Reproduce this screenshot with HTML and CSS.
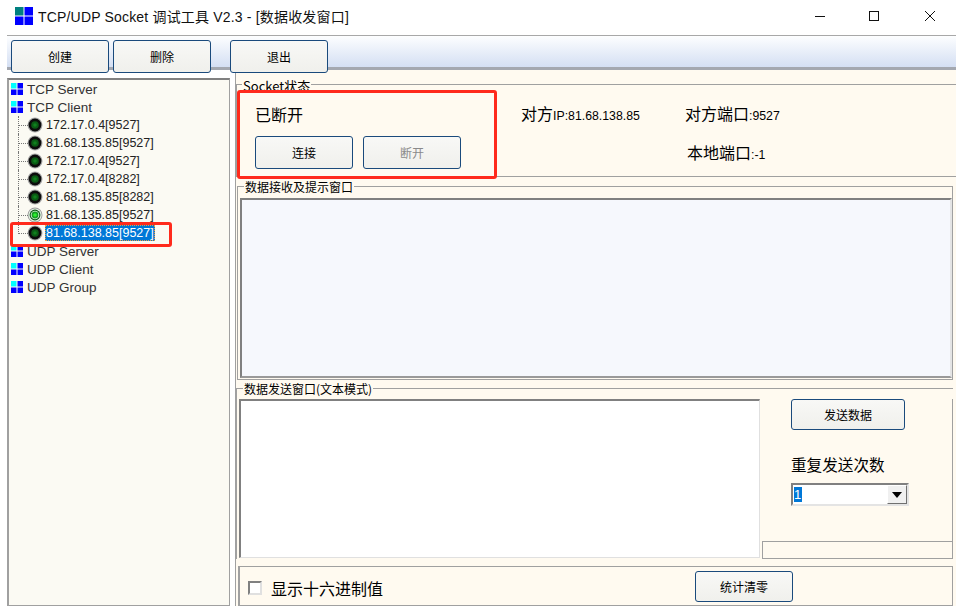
FILE: index.html
```html
<!DOCTYPE html>
<html lang="zh">
<head>
<meta charset="utf-8">
<title>TCP/UDP Socket 调试工具</title>
<link rel="stylesheet" href="styles.css">
</head>
<body>
<div class="window">
  <header class="titlebar">
    <svg class="app-icon" width="18" height="18" viewBox="0 0 18 18"><rect width="8.5" height="8.5" fill="#008080"/><rect x="9.5" width="8.5" height="8.5" fill="#0000ff"/><rect y="9.5" width="8.5" height="8.5" fill="#0000ff"/><rect x="9.5" y="9.5" width="8.5" height="8.5" fill="#0000ff"/></svg>
    <span class="title">TCP/UDP Socket 调试工具 V2.3 - [数据收发窗口]</span>
    <div class="win-controls">
      <svg width="12" height="12" viewBox="0 0 12 12"><path d="M1 6.5h10" stroke="#111" fill="none"/></svg>
      <svg width="12" height="12" viewBox="0 0 12 12"><rect x=".5" y="1.5" width="9" height="9" stroke="#111" fill="none"/></svg>
      <svg width="12" height="12" viewBox="0 0 12 12"><path d="M1 1l10 10M11 1L1 11" stroke="#111" fill="none"/></svg>
    </div>
  </header>
  <nav class="toolbar">
    <button class="btn tb-btn">创建</button>
    <button class="btn tb-btn">删除</button>
    <button class="btn tb-btn tb-gap">退出</button>
  </nav>
  <main class="main">
    <aside class="tree">
      <div class="node"><svg class="sq"><use href="#sq"/></svg>TCP Server</div>
      <div class="node"><svg class="sq"><use href="#sq"/></svg>TCP Client</div>
      <div class="child"><i class="branch"></i><svg class="led"><use href="#led"/></svg><span class="lbl">172.17.0.4[9527]</span></div>
      <div class="child"><i class="branch"></i><svg class="led"><use href="#led"/></svg><span class="lbl">81.68.135.85[9527]</span></div>
      <div class="child"><i class="branch"></i><svg class="led"><use href="#led"/></svg><span class="lbl">172.17.0.4[9527]</span></div>
      <div class="child"><i class="branch"></i><svg class="led"><use href="#led"/></svg><span class="lbl">172.17.0.4[8282]</span></div>
      <div class="child"><i class="branch"></i><svg class="led"><use href="#led"/></svg><span class="lbl">81.68.135.85[8282]</span></div>
      <div class="child"><i class="branch"></i><svg class="led"><use href="#led-on"/></svg><span class="lbl">81.68.135.85[9527]</span></div>
      <div class="child last"><i class="branch"></i><svg class="led"><use href="#led"/></svg><span class="lbl selected">81.68.138.85[9527]</span></div>
      <div class="node"><svg class="sq"><use href="#sq"/></svg>UDP Server</div>
      <div class="node"><svg class="sq"><use href="#sq"/></svg>UDP Client</div>
      <div class="node"><svg class="sq"><use href="#sq"/></svg>UDP Group</div>
      <div class="mark mark-tree"></div>
    </aside>
    <section class="content">
      <div class="group status">
        <span class="legend legend-status">Socket状态</span>
        <div class="status-left">
          <div class="state">已断开</div>
          <div class="status-btns">
            <button class="btn conn-btn">连接</button>
            <button class="btn conn-btn disabled">断开</button>
          </div>
        </div>
        <div class="status-mid"><span class="cjk">对方</span>IP:81.68.138.85</div>
        <div class="status-right">
          <div><span class="cjk">对方端口</span>:9527</div>
          <div class="local"><span class="cjk">本地端口</span>:-1</div>
        </div>
        <div class="mark mark-status"></div>
      </div>
      <div class="group recv">
        <span class="legend">数据接收及提示窗口</span>
        <div class="recv-box"></div>
      </div>
      <div class="group send">
        <span class="legend">数据发送窗口(文本模式)</span>
        <div class="send-box"></div>
        <div class="send-side">
          <button class="btn send-btn">发送数据</button>
          <div class="repeat">重复发送次数</div>
          <div class="combo"><span class="combo-val"><b>1</b></span><span class="combo-arrow"><svg width="10" height="6" viewBox="0 0 10 6"><path d="M0 0h10L5 6z" fill="#000"/></svg></span></div>
          <div class="side-foot"></div>
        </div>
      </div>
      <div class="bottom">
        <label class="hex"><span class="check"></span>显示十六进制值</label>
        <button class="btn stat-btn">统计清零</button>
      </div>
    </section>
  </main>
</div>
<svg width="0" height="0" class="defs">
  <defs>
    <g id="sq"><rect width="5.5" height="5.5" fill="#00ffff"/><rect x="6.5" width="5.5" height="5.5" fill="#0000ff"/><rect y="6.5" width="5.5" height="5.5" fill="#0000ff"/><rect x="6.5" y="6.5" width="5.5" height="5.5" fill="#0000ff"/></g>
    <g id="led"><circle cx="8" cy="8" r="7.5" fill="#a8a8a8"/><circle cx="8" cy="8" r="6.4" fill="#0c0c0c"/><circle cx="8" cy="8" r="3.8" fill="#0a5a14"/><circle cx="8" cy="8" r="1.8" fill="#10801e"/></g>
    <g id="led-on"><circle cx="8" cy="8" r="7.5" fill="#9a9a9a"/><circle cx="8" cy="8" r="6.6" fill="#e4efe4"/><circle cx="8" cy="8" r="5.4" fill="#0c5a16"/><circle cx="8" cy="8" r="4.3" fill="#d8ecd8"/><circle cx="8" cy="8" r="3.4" fill="#12a020"/><circle cx="8" cy="8" r="1.8" fill="#30f030"/></g>
  </defs>
</svg>
</body>
</html>
```
FILE: styles.css
```css
* { box-sizing: border-box; }
html, body { margin: 0; padding: 0; height: 606px; overflow: hidden; }
body { background: #fff; font-family: "Liberation Sans", "Noto Sans CJK SC", sans-serif; color: #000; }
.defs { position: absolute; }
.window { width: 956px; height: 606px; display: flex; flex-direction: column; overflow: hidden; }

.titlebar { height: 36px; flex: none; display: flex; align-items: center; border-bottom: 1px solid #a8a8a8; margin-left: 7px; padding-left: 8px; background: #fff; }
.app-icon { margin-top: -4px; flex: none; }
.title { margin-left: 5px; font-size: 14px; color: #111; margin-top: -3px; letter-spacing: .18px; white-space: nowrap; }
.win-controls { margin-left: auto; display: flex; gap: 43px; padding-right: 20px; margin-top: -4px; }

.toolbar { height: 34px; flex: none; margin-left: 7px; padding: 4px 0 0 4px; display: flex; gap: 4px; background: linear-gradient(#fdfeff, #d4dff3); border-bottom: 3px solid #a4a8b0; position: relative; z-index: 1; }
.btn { font-family: "Noto Sans CJK SC", sans-serif; font-size: 12px; color: #000; border: 1px solid #1a4a7c; border-radius: 3px; background: linear-gradient(#f8f8f6, #f0f0ec); padding: 0; flex: none; }
.tb-btn { width: 98px; height: 33px; }
.tb-gap { margin-left: 15px; }

.main { flex: 1; display: flex; padding-left: 7px; min-height: 0; background: #fff; }
.tree { width: 223px; flex: none; margin-top: 8px; background: #fbfaf3; border: 1px solid #a0a0a0; border-top: 2px solid #808080; border-left: 2px solid #a0a0a0; position: relative; font-size: 13.5px; color: #333; }
.node { height: 18px; display: flex; align-items: center; padding-left: 2px; white-space: nowrap; }
.sq { width: 12px; height: 12px; margin-right: 4px; flex: none; }
.child { height: 18px; display: flex; align-items: center; padding-left: 9px; font-size: 12.5px; white-space: nowrap; }
.branch { width: 9px; height: 18px; flex: none; border-left: 1px dotted #777; position: relative; }
.branch::before { content: ""; position: absolute; left: -1px; top: 0; width: 9px; height: 9px; border-left: 1px dotted #777; border-bottom: 1px dotted #777; }
.last .branch { border-left-color: transparent; }
.led { width: 16px; height: 16px; flex: none; }
.lbl { margin-left: 2px; padding: 0 1px; height: 16px; line-height: 17px; color: #222; }
.selected { background: #0078d7; color: #fff; outline: 1px dotted #e8a040; outline-offset: -1px; }
.mark { position: absolute; border: 3px solid #ff2a1c; border-radius: 3px; pointer-events: none; }
.mark-tree { left: 1px; top: 142px; width: 162px; height: 25px; }
.mark-status { left: 0; top: 5px; width: 260px; height: 89px; }

.content { flex: 1; min-width: 0; margin-left: 5px; border-left: 1px solid #a0a0a0; background: #fffaf0; display: flex; flex-direction: column; padding-top: 14px; }
.group { border: 1px solid #a0a0a0; position: relative; flex: none; }
.legend { position: absolute; left: 6px; top: -7px; padding: 0 1px; background: #fffaf0; font-family: "Noto Sans CJK SC", sans-serif; font-size: 12px; line-height: 14px; white-space: nowrap; }
.legend-status { left: 5px; top: -6px; font-size: 13px; }

.status { height: 93px; display: flex; border-right: 0; }
.status-left { width: 279px; padding: 17px 0 0 18px; }
.state { font-family: "Noto Sans CJK SC", sans-serif; font-size: 16px; line-height: 24px; }
.status-btns { display: flex; gap: 10px; margin-top: 10px; }
.conn-btn { width: 98px; height: 33px; }
.disabled { color: #8a8a8a; }
.status-mid, .status-right { font-size: 12.3px; line-height: 20px; padding-top: 18px; white-space: nowrap; }
.status-mid { width: 164px; margin-left: 5px; }
.cjk { font-family: "Noto Sans CJK SC", sans-serif; font-size: 16px; }
.local { margin: 16px 0 0 2px; }

.recv { height: 194px; margin: 9px 3px 0 1px; padding: 11px 0 1px 2px; }
.recv-box { height: 180px; background: #f6f8fd; border: 2px solid #808080; border-right-color: #e4e4e4; border-bottom-color: #9a9a9a; }

.send { height: 171px; margin: 8px 3px 0 0; padding: 10px 0 0 2px; display: flex; border-bottom: 0; border-right: 0; }
.send-box { width: 521px; height: 159px; background: #fff; border: 2px solid #808080; border-right: 1px solid #e0e0e0; border-bottom: 1px solid #e0e0e0; }
.send-side { flex: 1; margin-left: 2px; display: flex; flex-direction: column; border-right: 1px solid #a0a0a0; border-bottom: 1px solid #a0a0a0; }
.send-btn { width: 114px; height: 31px; margin-left: 29px; }
.repeat { margin: 23px 0 0 29px; font-family: "Noto Sans CJK SC", sans-serif; font-size: 15.6px; line-height: 22px; white-space: nowrap; }
.combo { width: 118px; height: 23px; margin: 8px 0 0 29px; display: flex; background: #fff; border: 2px solid #808080; border-right-color: #e4e4e4; border-bottom-color: #e4e4e4; flex: none; }
.combo-val { flex: 1; font-size: 13px; line-height: 15px; padding: 2px 0 0 1px; }
.combo-val b { display: inline-block; width: 8px; background: #0078d7; color: #fff; font-weight: 400; height: 15px; }
.combo-arrow { width: 20px; background: #f0f0f0; border: 1px solid #707070; border-top-color: #fff; border-left-color: #fff; display: flex; align-items: center; justify-content: center; }
.side-foot { margin-top: auto; height: 17px; border-top: 1px solid #a0a0a0; border-left: 1px solid #a0a0a0; }

.bottom { flex: 1; margin: 7px 3px 0 2px; border: 1px solid #a0a0a0; border-left-width: 2px; display: flex; align-items: flex-start; }
.hex { display: flex; align-items: center; margin: 9px 0 0 8px; font-family: "Noto Sans CJK SC", sans-serif; font-size: 16px; line-height: 24px; }
.check { width: 14px; height: 14px; background: #fff; border: 2px solid #808080; border-right-color: #e0e0e0; border-bottom-color: #e0e0e0; margin-right: 9px; }
.stat-btn { width: 98px; height: 31px; margin: 4px 0 0 312px; }
```
